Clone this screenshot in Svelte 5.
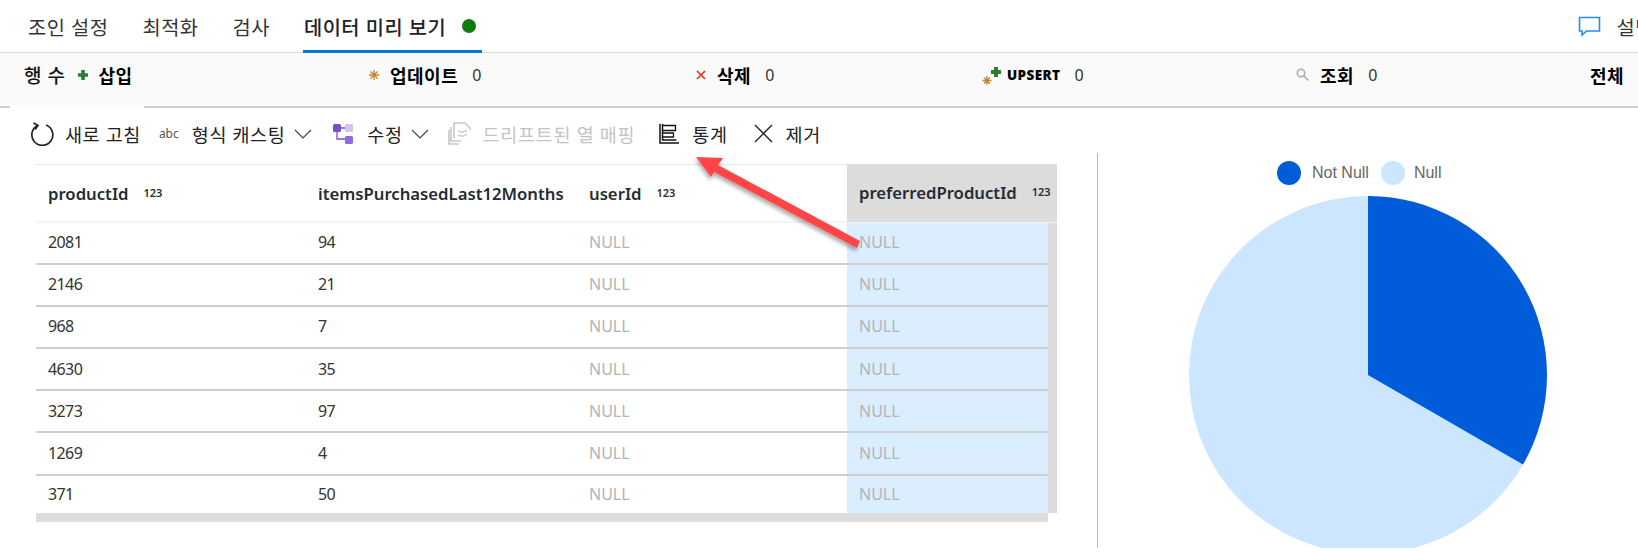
<script lang="ts">
	const rows = [
		['2081', '94'],
		['2146', '21'],
		['968', '7'],
		['4630', '35'],
		['3273', '97'],
		['1269', '4'],
		['371', '50']
	];
</script>

<div class="page">
	<nav class="tabs">
		<span class="tab first">조인 설정</span>
		<span class="tab">최적화</span>
		<span class="tab">검사</span>
		<span class="tab active">데이터 미리 보기<i class="dot"></i></span>
		<span class="explain">
			<svg width="23" height="22" viewBox="0 0 23 22" fill="none" stroke="#1e90e8" stroke-width="1.6">
				<path d="M1.5 2.5h20v13.5H8.5l-4.5 4v-4H1.5z" />
			</svg>
			<span>설명</span>
		</span>
	</nav>

	<section class="stats">
		<div class="stat">
			<span class="rowcount">행 수</span>
			<svg class="ic-plus" width="10" height="10" viewBox="0 0 11 11"><path d="M3.5 0h4v3.5H11v4H7.5V11h-4V7.5H0v-4h3.5z" fill="#2e7d32" /></svg>
			<b>삽입</b>
		</div>
		<div class="stat">
			<svg width="10" height="10" viewBox="0 0 10 10" stroke="#c8842c" stroke-width="1.3"><path d="M5 0v10M0 5h10M1.5 1.5l7 7M8.500 1.500l-7 7" /></svg>
			<b>업데이트</b><span class="num">0</span>
		</div>
		<div class="stat">
			<svg width="10" height="10" viewBox="0 0 10 10" stroke="#d9381e" stroke-width="1.7"><path d="M1 1l8 8M9 1l-8 8" /></svg>
			<b>삭제</b><span class="num">0</span>
		</div>
		<div class="stat">
			<svg class="ic-upsert" width="20" height="20" viewBox="0 0 20 20">
				<path d="M5 11v9M.5 15.500h9M2 12.500l6 6M8 12.500l-6 6" stroke="#c8842c" stroke-width="1.3" />
				<path d="M12 2h4v3h3v4h-3v3h-4V9H9V5h3z" fill="#2e7d32" />
			</svg>
			<b class="upsert">UPSERT</b><span class="num">0</span>
		</div>
		<div class="stat">
			<svg width="13" height="13" viewBox="0 0 13 13" fill="none" stroke="#aaa" stroke-width="1.5"><circle cx="5" cy="5" r="3.700" /><path d="M8 8l4.500 4.500" /></svg>
			<b>조회</b><span class="num">0</span>
		</div>
		<div class="stat"><b>전체</b></div>
		<span class="notch"></span>
	</section>

	<div class="toolbar">
		<button class="tool refresh">
			<svg width="24" height="24" viewBox="0 0 24 24" fill="none" stroke="#222" stroke-width="1.700">
				<path d="M7.500 3.500A10.500 10.500 0 1 0 16 3" />
				<path d="M3.500 1l4.500 2.500-3 4" />
			</svg>
			새로 고침
		</button>
		<button class="tool cast">
			<span class="abc">abc</span>
			형식 캐스팅
			<svg class="chev" width="18" height="10" viewBox="0 0 18 10" fill="none" stroke="#444" stroke-width="1.200"><path d="M1 1l8 8 8-8" /></svg>
		</button>
		<button class="tool modify">
			<svg width="20" height="20" viewBox="0 0 20 20">
				<path d="M4 6v9h9M8 4h5" fill="none" stroke="#7a4fc4" stroke-width="1.300" />
				<rect x="0" y="0" width="8" height="8" rx="1.500" fill="#7a4fc4" />
				<rect x="12" y="0" width="8" height="8" rx="1.500" fill="#d3c5ee" />
				<rect x="12" y="12" width="8" height="8" rx="1.500" fill="#9468d8" />
			</svg>
			수정
			<svg class="chev" width="18" height="10" viewBox="0 0 18 10" fill="none" stroke="#444" stroke-width="1.200"><path d="M1 1l8 8 8-8" /></svg>
		</button>
		<button class="tool drift" disabled>
			<svg width="23" height="23" viewBox="0 0 23 23" fill="none" stroke="#c8c8c8" stroke-width="1.600">
				<path d="M6 16V1h11l5 5v2" />
				<path d="M3 5v14h10M1 8v14h10" />
				<path d="M10 10c2-2 3 1 5 0s3-1 4-2M10 14c2-2 3 1 5 0s3-1 4-2" stroke="#d0d0d0" />
			</svg>
			드리프트된 열 매핑
		</button>
		<button class="tool stats-btn">
			<svg width="20" height="20" viewBox="0 0 20 20" fill="none" stroke="#111" stroke-width="1.300">
				<path d="M1 0v19h19M3.500 0v16.500" stroke-width="1.500" />
				<path d="M3.500 1.500h13v5h-13M3.500 9h11v4h-11M3.500 16h14" />
			</svg>
			통계
		</button>
		<button class="tool remove">
			<svg width="19" height="19" viewBox="0 0 19 19" stroke="#222" stroke-width="1.400"><path d="M1 1l17 17M18 1L1 18" /></svg>
			제거
		</button>
	</div>

	<main class="content">
		<div class="left">
			<div class="grid-head">
				<div class="th">productId<small>123</small></div>
				<div class="th">itemsPurchasedLast12Months</div>
				<div class="th">userId<small>123</small></div>
				<div class="th selected">preferredProductId<small>123</small></div>
			</div>
			<div class="grid-wrap">
				<div class="grid-body">
					{#each rows as row}
						<div class="row">
							<div class="td">{row[0]}</div>
							<div class="td">{row[1]}</div>
							<div class="td null">NULL</div>
							<div class="td null selected">NULL</div>
						</div>
					{/each}
				</div>
				<div class="vscroll"></div>
			</div>
			<div class="hscroll"></div>
		</div>

		<aside class="chart">
			<div class="legend">
				<i class="swatch dark"></i><span class="label first-label">Not Null</span>
				<i class="swatch light"></i><span class="label null-label">Null</span>
			</div>
			<svg class="pie" width="358" height="358" viewBox="-179 -179 358 358">
				<circle r="179" fill="#cce6ff" />
				<path d="M0 0V-179A179 179 0 0 1 155 89.500Z" fill="#005cd9" />
			</svg>
		</aside>
	</main>

	<svg class="arrow" width="190" height="110" viewBox="680 145 190 110">
		<defs>
			<filter id="shadow" x="-20%" y="-20%" width="140%" height="150%">
				<feDropShadow dx="-1" dy="3" stdDeviation="2" flood-color="#000" flood-opacity="0.35" />
			</filter>
		</defs>
		<polygon points="696,157 723,158 718,165 860,241 857,248 714,172 711,177" fill="#ff4444" filter="url(#shadow)" />
	</svg>
</div>

<style>
	:global(body) {
		margin: 0;
		background: #fff;
	}

	.page {
		position: relative;
		width: 1638px;
		height: 552px;
		overflow: hidden;
		font-family: 'Noto Sans', 'Noto Sans CJK KR', sans-serif;
		color: #222;
	}

	.tabs {
		display: flex;
		align-items: center;
		height: 52px;
		padding-left: 28px;
		border-bottom: 1px solid #e6dcd6;
		font-size: 19.800px;
		letter-spacing: 0.500px;
		color: #333;
	}

	.tab {
		display: flex;
		align-items: center;
		height: 52px;
		margin-right: 34px;
	}

	.tab.active {
		position: relative;
		margin-left: -1px;
		padding: 0 6px 0 1px;
		margin-right: 0;
		font-weight: 500;
		color: #222;
	}

	.tab.active::after {
		content: '';
		position: absolute;
		left: 0;
		right: 0;
		bottom: -1px;
		height: 3px;
		background: #0078d4;
	}

	.dot {
		width: 14px;
		height: 14px;
		margin-left: 16px;
		border-radius: 50%;
		background: #107c10;
	}

	.explain {
		display: flex;
		align-items: center;
		gap: 16px;
		margin-left: auto;
		margin-right: -16px;
	}

	.stats {
		position: relative;
		display: grid;
		grid-template-columns: 345px 327px 286px 314px 294px 48px;
		align-items: center;
		height: 55px;
		padding: 0 0 10px 24px;
		box-sizing: border-box;
		background: #fafafa;
		border-bottom: 2px solid #cfcfcf;
		font-size: 18px;
		color: #111;
	}

	.stat {
		display: flex;
		align-items: center;
		gap: 11px;
	}

	.stat b {
		font-weight: 700;
		letter-spacing: 0.500px;
		color: #000;
	}

	.rowcount {
		font-size: 19px;
		font-weight: 500;
		letter-spacing: 0.500px;
		margin-right: 2px;
	}

	.ic-plus {
		margin-right: -1px;
	}

	.ic-upsert {
		margin-right: -6px;
	}

	.stat .upsert {
		font-family: 'Open Sans', sans-serif;
		font-size: 13.500px;
		font-weight: 800;
		letter-spacing: 0.400px;
	}

	.num {
		margin-left: 3px;
		font-size: 16px;
		color: #333;
	}

	.notch {
		position: absolute;
		left: 10px;
		bottom: -2px;
		width: 134px;
		height: 3px;
		background: #fff;
	}

	.toolbar {
		display: flex;
		align-items: center;
		height: 45px;
		padding: 6px 0 0 30px;
		box-sizing: border-box;
		font-size: 18.500px;
		letter-spacing: 0.600px;
	}

	.tool {
		display: flex;
		align-items: center;
		padding: 0;
		border: none;
		background: none;
		font: inherit;
		letter-spacing: inherit;
		color: #222;
		white-space: nowrap;
	}

	.refresh {
		gap: 11px;
		margin-right: 18px;
	}

	.abc {
		font-size: 12px;
		letter-spacing: 0;
		color: #555;
	}

	.cast {
		gap: 13px;
		margin-right: 21px;
	}

	.cast .chev {
		margin-left: -4px;
	}

	.modify {
		gap: 14px;
		margin-right: 19px;
	}

	.modify .chev {
		margin-left: -6px;
	}

	.drift {
		gap: 12px;
		margin-right: 24px;
		letter-spacing: 0.700px;
		color: #c4c4c4;
	}

	.stats-btn {
		gap: 13px;
		margin-right: 26px;
	}

	.remove {
		gap: 13px;
	}

	.content {
		display: flex;
		height: 395px;
	}

	.left {
		width: 1061px;
		padding: 11px 0 0 36px;
		flex-shrink: 0;
	}

	.grid-head,
	.row {
		display: grid;
		grid-template-columns: 270px 271px 270px 201px;
	}

	.grid-head {
		grid-template-columns: 270px 271px 270px 210px;
		width: 1021px;
		height: 58.500px;
		border-top: 1px solid #e6e6e6;
		border-bottom: 2px solid #f4f4f4;
		box-sizing: border-box;
	}

	.th {
		display: flex;
		align-items: center;
		padding-left: 12px;
		font-size: 16.700px;
		font-weight: 600;
		color: #252b33;
		white-space: nowrap;
	}

	.th small {
		margin-left: 15px;
		font-size: 11px;
		position: relative;
		top: -1px;
	}

	.th.selected {
		margin-top: -1px;
		height: 57.500px;
		background: #dcdcdc;
	}

	.grid-wrap {
		display: flex;
		width: 1021px;
	}

	.grid-body {
		width: 1012px;
	}

	.row {
		position: relative;
		height: 42.200px;
	}

	.row::after {
		content: '';
		position: absolute;
		left: 0;
		right: 0;
		bottom: 0;
		height: 2px;
		background: #cfcfcf;
	}

	.row:last-child {
		height: 37px;
	}

	.row:last-child::after {
		display: none;
	}

	.row:last-child .td {
		padding-bottom: 0;
	}

	.td {
		display: flex;
		align-items: center;
		padding: 0 0 3px 12px;
		font-size: 16px;
		letter-spacing: -0.600px;
		color: #333;
	}

	.td.null {
		color: #b4b4b4;
		letter-spacing: 0;
	}

	.td.selected {
		background: #dbeeff;
	}

	.vscroll {
		width: 9px;
		background: #dcdcdc;
	}

	.hscroll {
		width: 1012px;
		height: 9px;
		background: #dcdcdc;
	}

	.chart {
		flex: 1;
		border-left: 1px solid #bdbdbd;
		overflow: hidden;
	}

	.legend {
		display: flex;
		align-items: center;
		height: 24px;
		margin-top: 8px;
		padding-left: 179px;
		font-family: 'Liberation Sans', sans-serif;
		font-size: 16px;
		color: #666;
	}

	.swatch {
		width: 24px;
		height: 24px;
		border-radius: 50%;
	}

	.swatch.dark {
		background: #005cd9;
	}

	.swatch.light {
		background: #cce6ff;
	}

	.label {
		margin-left: 11px;
	}

	.first-label {
		margin-right: 12px;
	}

	.null-label {
		margin-left: 9px;
	}

	.pie {
		display: block;
		margin: 11px 0 0 91px;
	}

	.arrow {
		position: absolute;
		left: 680px;
		top: 145px;
	}
</style>
